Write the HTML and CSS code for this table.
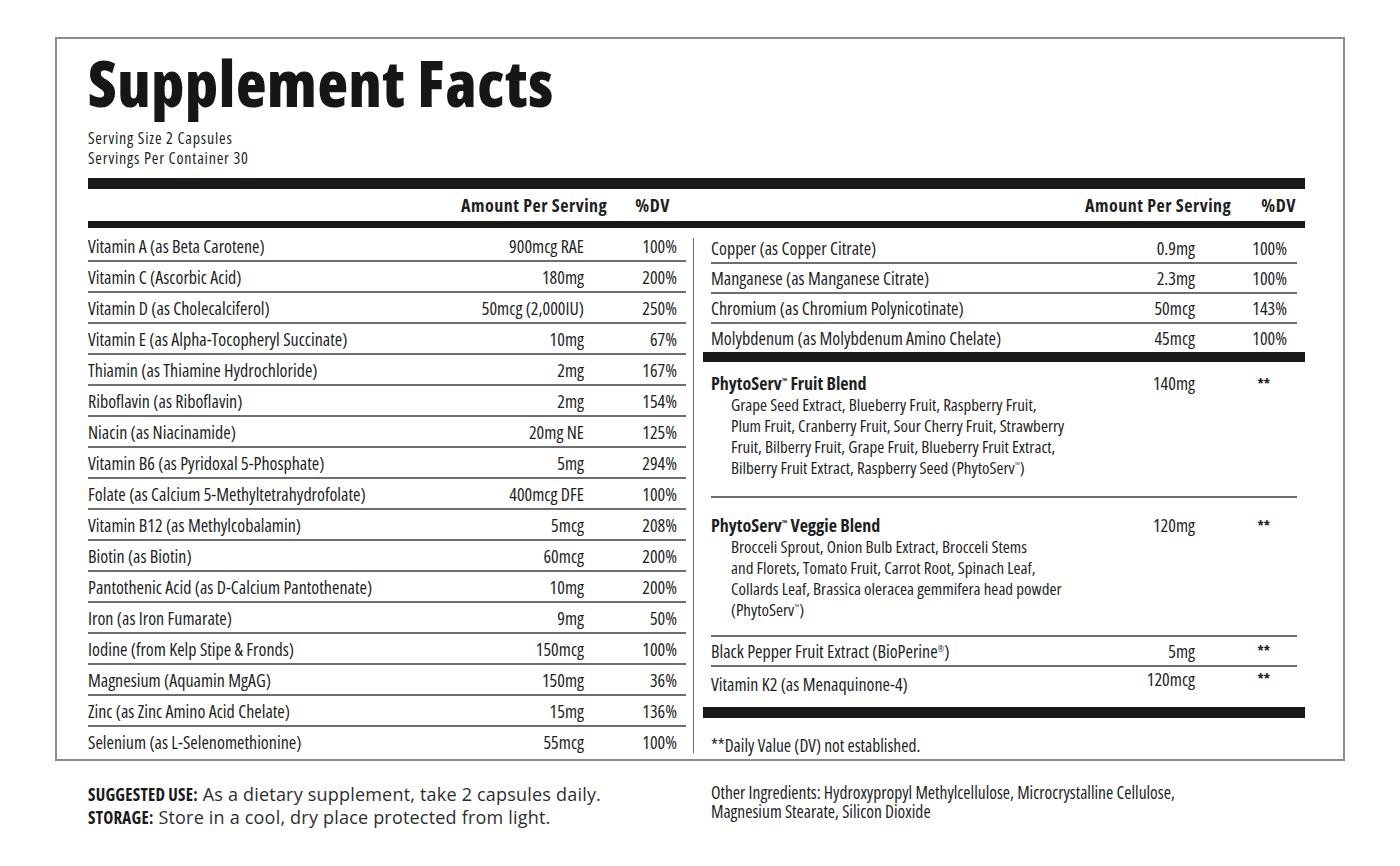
FILE: index.html
```html
<!DOCTYPE html>
<html lang="en">
<head>
<meta charset="utf-8">
<title>Supplement Facts</title>
<link rel="stylesheet" href="styles.css">
</head>
<body>
<div class="label">
  <h1 class="title">Supplement Facts</h1>
  <div class="serving">Serving Size 2 Capsules<br>Servings Per Container 30</div>
  <div class="bar bar-top"></div>
  <div class="cols head">
    <div class="head-cell head-left"><span>Amount Per Serving</span><span class="h-dv">%DV</span></div>
    <div></div>
    <div class="head-cell head-right"><span>Amount Per Serving</span><span class="h-dv">%DV</span></div>
  </div>
  <div class="bar bar-mid"></div>
  <div class="cols body">
    <div class="col-left">
      <div class="row"><span class="name">Vitamin A (as Beta Carotene)</span><span class="amt">900mcg RAE</span><span class="dv">100%</span></div>
      <div class="row"><span class="name">Vitamin C (Ascorbic Acid)</span><span class="amt">180mg</span><span class="dv">200%</span></div>
      <div class="row"><span class="name">Vitamin D (as Cholecalciferol)</span><span class="amt">50mcg (2,000IU)</span><span class="dv">250%</span></div>
      <div class="row"><span class="name">Vitamin E (as Alpha-Tocopheryl Succinate)</span><span class="amt">10mg</span><span class="dv">67%</span></div>
      <div class="row"><span class="name">Thiamin (as Thiamine Hydrochloride)</span><span class="amt">2mg</span><span class="dv">167%</span></div>
      <div class="row"><span class="name">Riboflavin (as Riboflavin)</span><span class="amt">2mg</span><span class="dv">154%</span></div>
      <div class="row"><span class="name">Niacin (as Niacinamide)</span><span class="amt">20mg NE</span><span class="dv">125%</span></div>
      <div class="row"><span class="name">Vitamin B6 (as Pyridoxal 5-Phosphate)</span><span class="amt">5mg</span><span class="dv">294%</span></div>
      <div class="row"><span class="name">Folate (as Calcium 5-Methyltetrahydrofolate)</span><span class="amt">400mcg DFE</span><span class="dv">100%</span></div>
      <div class="row"><span class="name">Vitamin B12 (as Methylcobalamin)</span><span class="amt">5mcg</span><span class="dv">208%</span></div>
      <div class="row"><span class="name">Biotin (as Biotin)</span><span class="amt">60mcg</span><span class="dv">200%</span></div>
      <div class="row"><span class="name">Pantothenic Acid (as D-Calcium Pantothenate)</span><span class="amt">10mg</span><span class="dv">200%</span></div>
      <div class="row"><span class="name">Iron (as Iron Fumarate)</span><span class="amt">9mg</span><span class="dv">50%</span></div>
      <div class="row"><span class="name">Iodine (from Kelp Stipe &amp; Fronds)</span><span class="amt">150mcg</span><span class="dv">100%</span></div>
      <div class="row"><span class="name">Magnesium (Aquamin MgAG)</span><span class="amt">150mg</span><span class="dv">36%</span></div>
      <div class="row"><span class="name">Zinc (as Zinc Amino Acid Chelate)</span><span class="amt">15mg</span><span class="dv">136%</span></div>
      <div class="row"><span class="name">Selenium (as L-Selenomethionine)</span><span class="amt">55mcg</span><span class="dv">100%</span></div>
    </div>
    <div class="divider"></div>
    <div class="col-right">
      <div class="rrow"><span class="name">Copper (as Copper Citrate)</span><span class="amt">0.9mg</span><span class="dv">100%</span></div>
      <div class="rrow"><span class="name">Manganese (as Manganese Citrate)</span><span class="amt">2.3mg</span><span class="dv">100%</span></div>
      <div class="rrow"><span class="name">Chromium (as Chromium Polynicotinate)</span><span class="amt">50mcg</span><span class="dv">143%</span></div>
      <div class="rrow"><span class="name">Molybdenum (as Molybdenum Amino Chelate)</span><span class="amt">45mcg</span><span class="dv">100%</span></div>
      <div class="rbar rbar-1"></div>
      <div class="blend blend-fruit">
        <div class="name">
          <div class="blend-title">PhytoServ<sup>™</sup> Fruit Blend</div>
          <div class="blend-sub">Grape Seed Extract, Blueberry Fruit, Raspberry Fruit,<br>Plum Fruit, Cranberry Fruit, Sour Cherry Fruit, Strawberry<br>Fruit, Bilberry Fruit, Grape Fruit, Blueberry Fruit Extract,<br>Bilberry Fruit Extract, Raspberry Seed (PhytoServ<sup>™</sup>)</div>
        </div>
        <span class="amt">140mg</span><span class="dv na">**</span>
      </div>
      <div class="blend blend-veggie">
        <div class="name">
          <div class="blend-title">PhytoServ<sup>™</sup> Veggie Blend</div>
          <div class="blend-sub">Brocceli Sprout, Onion Bulb Extract, Brocceli Stems<br>and Florets, Tomato Fruit, Carrot Root, Spinach Leaf,<br>Collards Leaf, Brassica oleracea gemmifera head powder<br>(PhytoServ<sup>™</sup>)</div>
        </div>
        <span class="amt">120mg</span><span class="dv na">**</span>
      </div>
      <div class="rrow pepper"><span class="name">Black Pepper Fruit Extract (BioPerine<sup>®</sup>)</span><span class="amt">5mg</span><span class="dv na">**</span></div>
      <div class="rrow k2"><span class="name">Vitamin K2 (as Menaquinone-4)</span><span class="amt">120mcg</span><span class="dv na">**</span></div>
      <div class="rbar rbar-2"></div>
      <div class="disclaimer">**Daily Value (DV) not established.</div>
    </div>
  </div>
</div>
<div class="footer">
  <div class="use">
    <div><b class="lbl">SUGGESTED USE:</b> As a dietary supplement, take 2 capsules daily.</div>
    <div><b class="lbl">STORAGE:</b> Store in a cool, dry place protected from light.</div>
  </div>
  <div class="other">Other Ingredients: Hydroxypropyl Methylcellulose, Microcrystalline Cellulose,<br>Magnesium Stearate, Silicon Dioxide</div>
</div>
</body>
</html>
```
FILE: styles.css
```css
* { box-sizing: border-box; }
html, body { margin: 0; padding: 0; background: #ffffff; }
body {
  font-family: "Open Sans", "Roboto", sans-serif;
  font-stretch: 75%;
  color: #1f1f1f;
  width: 1400px;
  height: 866px;
  overflow: hidden;
}

.label {
  margin: 37px 0 0 55px;
  width: 1290px;
  height: 724px;
  border: 2px solid #8d8d8d;
  padding: 13px 38px 0 31px;
}

.title {
  margin: 0;
  font-size: 63px;
  line-height: 62px;
  font-weight: 800;
  letter-spacing: 0.7px;
  color: #161616;
}

.serving {
  margin-top: 14px;
  font-size: 16px;
  letter-spacing: 0.8px;
  line-height: 20px;
}

.bar { background: #1a1a1a; }
.bar-top { margin-top: 10px; height: 11px; }
.bar-mid { height: 7px; }

.cols {
  display: grid;
  grid-template-columns: 605px 1px 1fr;
}

.head { height: 32px; }
.head-cell {
  display: flex;
  justify-content: flex-end;
  align-items: center;
  font-weight: 700;
  font-size: 18px;
  letter-spacing: 0.5px;
}
.head-left { padding-right: 23px; gap: 28px; }
.head-right { padding-right: 9px; gap: 30px; }

.col-left { padding: 3px 7px 3px 0; }

.row, .rrow {
  display: grid;
  align-items: center;
  font-size: 18px;
  line-height: 20px;
}
.row {
  grid-template-columns: 1fr auto 93px;
  height: 31px;
  padding-right: 9px;
  border-bottom: 2px solid #6e6e6e;
}
.row:last-child { border-bottom: 0; height: 29px; }

.amt { text-align: right; }
.dv { text-align: right; }
.dv.na { padding-right: 17px; font-size: 14px; font-weight: 700; }

.divider {
  background: #6a6a6a;
  margin: 10px 0 6px;
}

.col-right { padding-top: 6px; }

.rrow {
  grid-template-columns: 1fr auto 92px;
  margin: 0 8px 0 17px;
  padding-right: 10px;
  height: 30px;
  border-bottom: 2px solid #6e6e6e;
}
.rrow:nth-child(4) { border-bottom: 0; height: 28px; }

.rbar { background: #1a1a1a; margin-left: 9px; }
.rbar-1 { height: 10px; }
.rbar-2 { height: 11px; }

.blend {
  display: grid;
  grid-template-columns: 1fr auto 92px;
  align-items: start;
  margin: 0 8px 0 17px;
  padding-right: 10px;
  border-bottom: 2px solid #6e6e6e;
  font-size: 18px;
  line-height: 21px;
}
.blend-fruit { padding-top: 11px; padding-bottom: 18px; }
.blend-veggie { padding-top: 17px; padding-bottom: 15px; }
.blend-title { font-weight: 700; font-size: 18px; }
.blend-sub { padding-left: 20px; font-size: 17px; }

sup { font-size: 8px; line-height: 0; vertical-align: 6px; }

.pepper { height: 30px; }
.k2 {
  height: 40px;
  border-bottom: 0;
  align-items: start;
}
.k2 .name { padding-top: 7px; }
.k2 .amt, .k2 .dv { padding-top: 2px; }

.disclaimer {
  margin: 17px 0 0 17px;
  font-size: 17.5px;
  line-height: 20px;
}

.footer {
  display: flex;
  margin-top: 22px;
  padding-left: 88px;
}
.use {
  width: 623px;
  font-stretch: 100%;
  font-size: 18px;
  letter-spacing: 0.2px;
  line-height: 23px;
  color: #2e2e2e;
}
.lbl {
  font-stretch: 75%;
  font-weight: 700;
  font-size: 17px;
  letter-spacing: 0.2px;
  color: #1a1a1a;
}
.other {
  font-size: 17.5px;
  line-height: 19px;
}
```
